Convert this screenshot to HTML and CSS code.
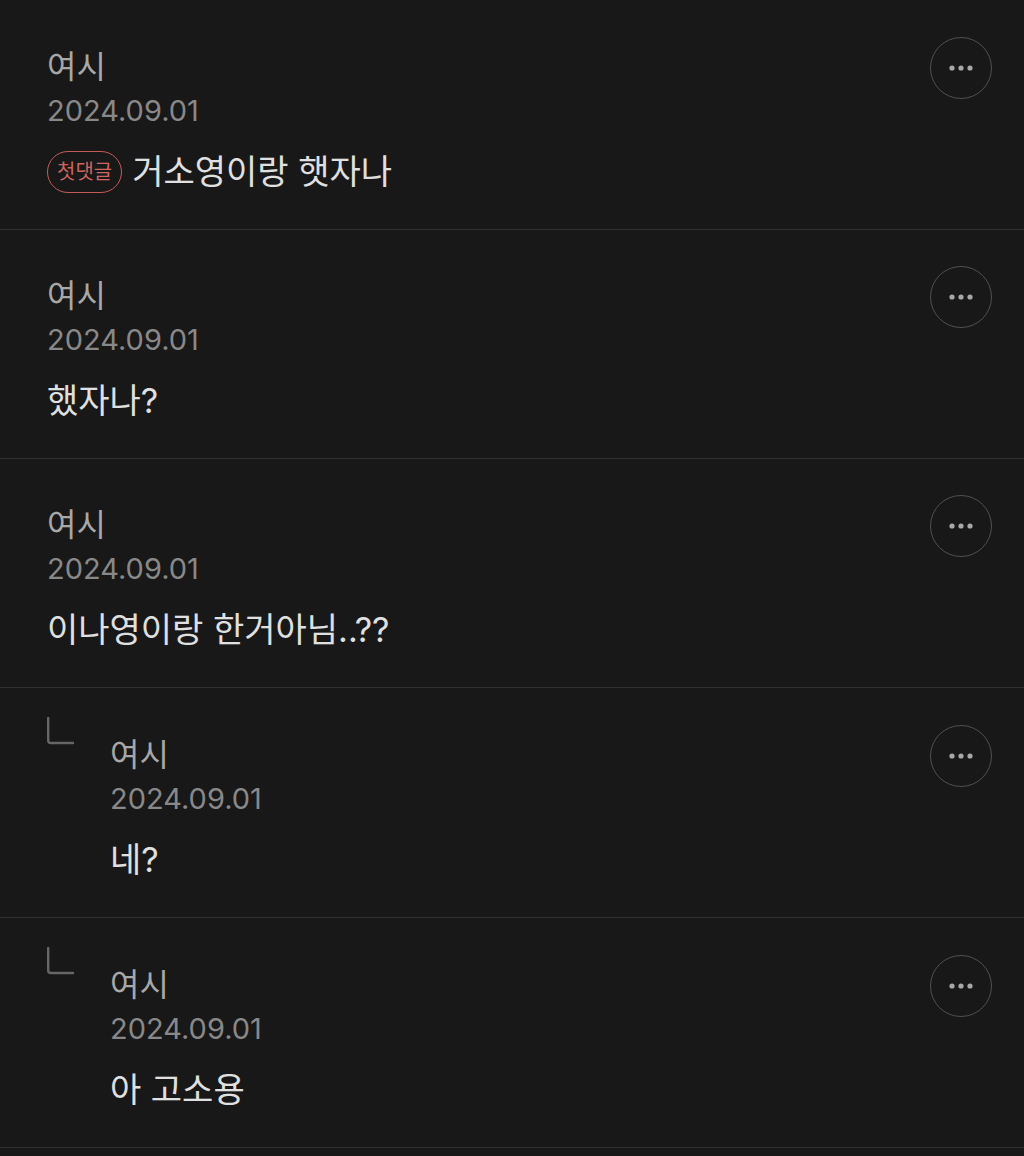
FILE: index.html
```html
<!doctype html>
<html lang="ko">
<head>
<meta charset="utf-8">
<meta name="viewport" content="width=device-width, initial-scale=1">
<title>댓글</title>
<link rel="stylesheet" href="styles.css">
</head>

<body>
<ul class="comments">
	<li class="comment">
		<div class="cont">
			<p class="name">여시</p>
			<p class="date">2024.09.01</p>
			<p class="text"><span class="first">첫댓글</span>거소영이랑 햇자나</p>
		</div>
		<button type="button" class="more" aria-label="더보기"><svg viewBox="0 0 24 6"><circle cx="3" cy="3" r="2.6"/><circle cx="12" cy="3" r="2.6"/><circle cx="21" cy="3" r="2.6"/></svg></button>
	</li>
	<li class="comment">
		<div class="cont">
			<p class="name">여시</p>
			<p class="date">2024.09.01</p>
			<p class="text">했자나?</p>
		</div>
		<button type="button" class="more" aria-label="더보기"><svg viewBox="0 0 24 6"><circle cx="3" cy="3" r="2.6"/><circle cx="12" cy="3" r="2.6"/><circle cx="21" cy="3" r="2.6"/></svg></button>
	</li>
	<li class="comment">
		<div class="cont">
			<p class="name">여시</p>
			<p class="date">2024.09.01</p>
			<p class="text">이나영이랑 한거아님..??</p>
		</div>
		<button type="button" class="more" aria-label="더보기"><svg viewBox="0 0 24 6"><circle cx="3" cy="3" r="2.6"/><circle cx="12" cy="3" r="2.6"/><circle cx="21" cy="3" r="2.6"/></svg></button>
	</li>
	<li class="comment reply">
		<svg class="arrow" viewBox="0 0 28 28"><path d="M1.200 1V23.500Q1.200 26 3.700 26H26"/></svg>
		<div class="cont">
			<p class="name">여시</p>
			<p class="date">2024.09.01</p>
			<p class="text">네?</p>
		</div>
		<button type="button" class="more" aria-label="더보기"><svg viewBox="0 0 24 6"><circle cx="3" cy="3" r="2.6"/><circle cx="12" cy="3" r="2.6"/><circle cx="21" cy="3" r="2.6"/></svg></button>
	</li>
	<li class="comment reply">
		<svg class="arrow" viewBox="0 0 28 28"><path d="M1.200 1V23.500Q1.200 26 3.700 26H26"/></svg>
		<div class="cont">
			<p class="name">여시</p>
			<p class="date">2024.09.01</p>
			<p class="text">아 고소용</p>
		</div>
		<button type="button" class="more" aria-label="더보기"><svg viewBox="0 0 24 6"><circle cx="3" cy="3" r="2.6"/><circle cx="12" cy="3" r="2.6"/><circle cx="21" cy="3" r="2.6"/></svg></button>
	</li>
</ul>
</body>
</html>
```

FILE: styles.css
```css
*{margin:0; padding:0; list-style:none; box-sizing:border-box;}
body{background:#181818; color:#e0e0e0; font-family:Inter,"Noto Sans CJK KR",sans-serif;}
.comments{padding-top:1px;}
.comment{display:flex; align-items:flex-start; padding:36px 32px 33px 47px; border-bottom:1px solid #303030;}
.cont{flex:1; min-width:0; padding-top:8px;}
.name{font-size:32px; line-height:44px; color:#a8a8a8;}
.date{font-size:29px; line-height:44px; color:#888;}
.text{display:flex; align-items:center; gap:10px; margin-top:15px; font-size:34px; line-height:48px;}
.first{height:42px; padding:0 9px; border:1px solid #c55b57; border-radius:21px; font-size:20px; line-height:40px; color:#cc6560;}
.more{display:flex; align-items:center; justify-content:center; width:62px; height:62px; border:1px solid #505050; border-radius:50%; background:none; cursor:pointer;}
.more svg{width:24px; height:6px; fill:#a8a8a8;}
.reply{padding-top:29px;}
.reply .cont{padding-top:16px;}
.reply .more{margin-top:8px;}
.arrow{width:28px; height:28px; margin-right:35px; fill:none; stroke:#666; stroke-width:2.4; stroke-linecap:round;}
```
